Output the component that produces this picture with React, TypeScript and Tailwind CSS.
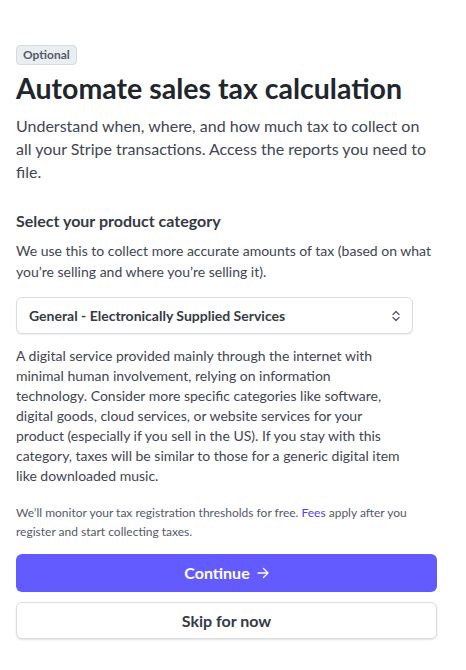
import React from "react";

const descLines = [
  "A digital service provided mainly through the internet with",
  "minimal human involvement, relying on information",
  "technology. Consider more specific categories like software,",
  "digital goods, cloud services, or website services for your",
  "product (especially if you sell in the US). If you stay with this",
  "category, taxes will be similar to those for a generic digital item",
  "like downloaded music.",
];

export default function App() {
  return (
    <div
      className="w-[466px] h-[670px] bg-white text-[#414552]"
      style={{ fontFamily: 'Lato, "Noto Sans", sans-serif' }}
    >
      <div className="pl-4 pr-[29px] pt-[45px]">
        <div className="flex">
          <span className="inline-flex h-[20px] items-center rounded-[4px] border border-[#d5dbe1] bg-[#ebeef1] px-[6px] text-[12px] font-bold text-[#545969]">
            Optional
          </span>
        </div>
        <h1 className="mt-[6px] text-[28.5px] font-bold leading-[34px] text-[#21252c]">
          Automate sales tax calculation
        </h1>
        <p className="mt-[9px] text-[16px] leading-[23px] text-[#414552]">
          Understand when, where, and how much tax to collect on all your Stripe transactions. Access the reports you need to file.
        </p>
        <h2 className="mt-[26px] text-[16px] font-bold leading-[24px] text-[#353a44]">
          Select your product category
        </h2>
        <p className="mt-[7px] text-[14px] leading-[21px] text-[#414552]">
          We use this to collect more accurate amounts of tax (based on what you’re selling and where you’re selling it).
        </p>
        <div className="mt-[15px] flex h-[37px] w-[397px] items-center justify-between rounded-[6px] border border-[#d8dee4] bg-white pl-[12px] pr-[10px] shadow-[0_1px_1px_rgba(0,0,0,0.08)]">
          <span className="text-[14px] font-bold text-[#353a44]">General - Electronically Supplied Services</span>
          <svg width="12" height="12" viewBox="0 0 12 12" fill="none" stroke="#545969" strokeWidth="1.3" strokeLinecap="round" strokeLinejoin="round">
            <path d="M3 4.5 6 1.5 9 4.5" />
            <path d="M3 7.5 6 10.5 9 7.5" />
          </svg>
        </div>
        <p className="mt-[12px] text-[14px] leading-[20px] text-[#414552]">
          {descLines.map((l, i) => (
            <span key={i} className="block whitespace-nowrap">
              {l}
            </span>
          ))}
        </p>
        <div className="mt-[17px] text-[12px] leading-[19px] text-[#545969]">
          <div className="whitespace-nowrap">
            <span>We’ll monitor your tax registration thresholds for free. </span>
            <a className="text-[#533afd]">Fees</a>
            <span> apply after you</span>
          </div>
          <div>register and start collecting taxes.</div>
        </div>
        <button className="mt-[13px] flex h-[38px] w-full items-center justify-center gap-[7px] rounded-[6px] bg-[#635bff] text-[16px] font-bold text-white">
          Continue
          <svg width="12" height="12" viewBox="0 0 12 12" fill="none" stroke="white" strokeWidth="1.3" strokeLinecap="round" strokeLinejoin="round">
            <path d="M1 6h10M6.5 1.5 11 6l-4.5 4.5" />
          </svg>
        </button>
        <button className="mt-[10px] flex h-[37px] w-full items-center justify-center rounded-[6px] border border-[#d8dee4] bg-white text-[16px] font-bold text-[#353a44] shadow-[0_1px_2px_rgba(0,0,0,0.12)]">
          Skip for now
        </button>
      </div>
    </div>
  );
}
